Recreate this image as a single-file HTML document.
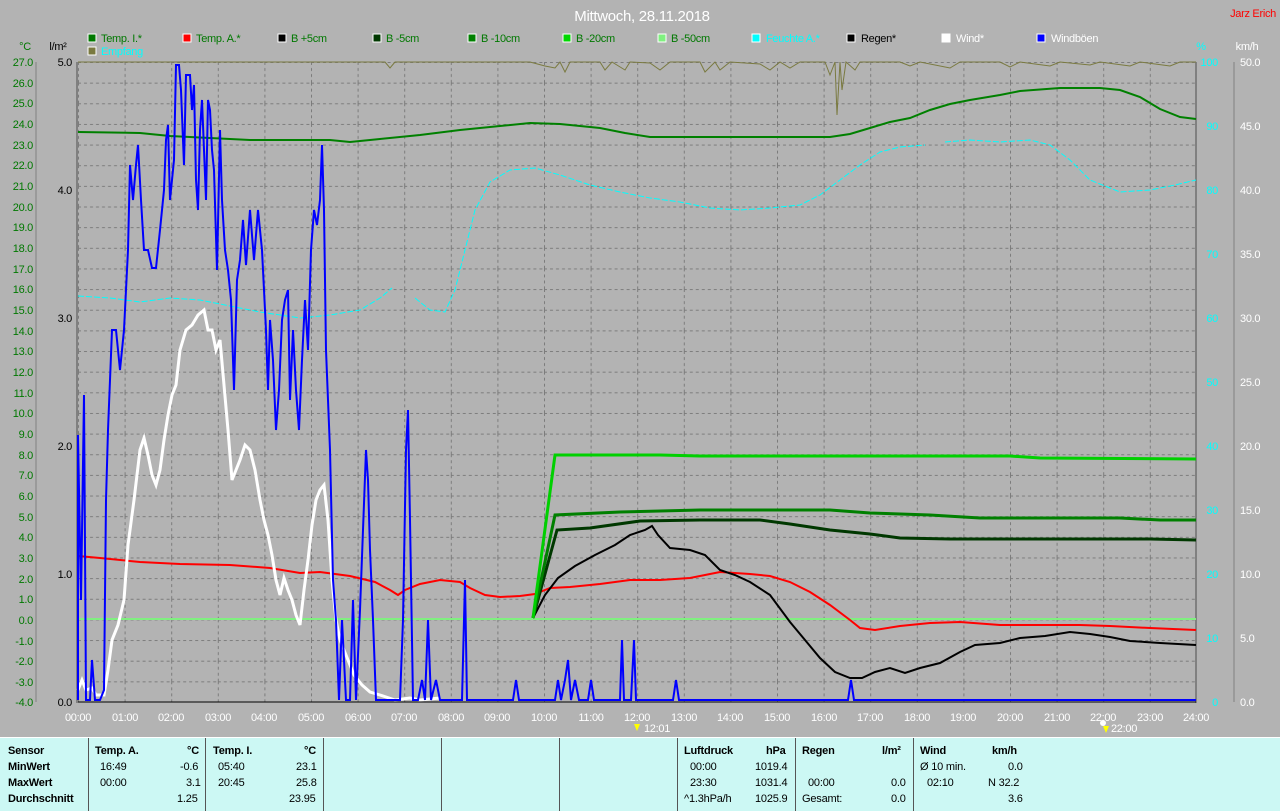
<!DOCTYPE html>
<html><head><meta charset="utf-8"><style>
body{margin:0;width:1280px;height:810px;overflow:hidden;background:#b3b3b3;font-family:"Liberation Sans",sans-serif;}
svg{position:absolute;left:0;top:0}
svg text{letter-spacing:-0.3px}
.tbl{position:absolute;left:0;top:737px;width:1280px;height:73px;background:#ccf8f4;border-top:1px solid #fff;font-size:11px;color:#000;letter-spacing:-0.2px}
.tbl div{position:absolute;white-space:nowrap}
.b{font-weight:bold}
.vl{position:absolute;top:0;width:1px;height:73px;background:#555}
</style></head><body>
<svg width="1280" height="737" font-family="Liberation Sans, sans-serif">
<defs>
<pattern id="g" x="78" y="62" width="46.6" height="20.645" patternUnits="userSpaceOnUse">
<line x1="0" y1="0.5" x2="46.6" y2="0.5" stroke="#7c7c7c" stroke-dasharray="3,3"/>
<line x1="0.5" y1="0" x2="0.5" y2="20.645" stroke="#7c7c7c" stroke-dasharray="3,3"/>
</pattern>
</defs>
<text x="642" y="21" fill="#fff" font-size="15" text-anchor="middle">Mittwoch, 28.11.2018</text>
<text x="1276" y="17" fill="#f00" font-size="11" text-anchor="end">Jarz Erich</text>
<g font-size="11">
<rect x="88" y="34" width="8" height="8" fill="#007800" stroke="#fff"/><text x="101" y="42" fill="#007800">Temp. I.*</text>
<rect x="183" y="34" width="8" height="8" fill="#f00" stroke="#fff"/><text x="196" y="42" fill="#007800">Temp. A.*</text>
<rect x="278" y="34" width="8" height="8" fill="#000" stroke="#fff"/><text x="291" y="42" fill="#007800">B +5cm</text>
<rect x="373" y="34" width="8" height="8" fill="#003800" stroke="#fff"/><text x="386" y="42" fill="#007800">B -5cm</text>
<rect x="468" y="34" width="8" height="8" fill="#008000" stroke="#fff"/><text x="481" y="42" fill="#007800">B -10cm</text>
<rect x="563" y="34" width="8" height="8" fill="#00d800" stroke="#fff"/><text x="576" y="42" fill="#007800">B -20cm</text>
<rect x="658" y="34" width="8" height="8" fill="#80f080" stroke="#fff"/><text x="671" y="42" fill="#007800">B -50cm</text>
<rect x="752" y="34" width="8" height="8" fill="#0ff" stroke="#fff"/><text x="766" y="42" fill="#0ff">Feuchte A.*</text>
<rect x="847" y="34" width="8" height="8" fill="#000" stroke="#fff"/><text x="861" y="42" fill="#000">Regen*</text>
<rect x="942" y="34" width="8" height="8" fill="#fff" stroke="#fff"/><text x="956" y="42" fill="#fff">Wind*</text>
<rect x="1037" y="34" width="8" height="8" fill="#00f" stroke="#fff"/><text x="1051" y="42" fill="#fff">Windböen</text>
<rect x="88" y="47" width="8" height="8" fill="#7a7a40" stroke="#fff"/><text x="101" y="55" fill="#0ff">Empfang</text>
<text x="25" y="50" fill="#007800" text-anchor="middle">°C</text>
<text x="58" y="50" fill="#000" text-anchor="middle">l/m²</text>
<text x="1201" y="50" fill="#0ff" text-anchor="middle">%</text>
<text x="1247" y="50" fill="#fff" text-anchor="middle">km/h</text>
</g>
<rect x="78" y="62" width="1118" height="640" fill="url(#g)"/>
<line x1="77" y1="62" x2="77" y2="703" stroke="#808080" stroke-width="2"/>
<line x1="1196" y1="62" x2="1196" y2="703" stroke="#808080" stroke-width="2"/>
<line x1="36" y1="62" x2="36" y2="702" stroke="#808080"/>
<line x1="1234" y1="62" x2="1234" y2="702" stroke="#808080"/>
<line x1="78" y1="702" x2="1196" y2="702" stroke="#000"/>
<g font-size="11" text-anchor="end">
<text x="33" y="66" fill="#007800">27.0</text><text x="33" y="87" fill="#007800">26.0</text><text x="33" y="107" fill="#007800">25.0</text><text x="33" y="128" fill="#007800">24.0</text><text x="33" y="149" fill="#007800">23.0</text><text x="33" y="169" fill="#007800">22.0</text><text x="33" y="190" fill="#007800">21.0</text><text x="33" y="211" fill="#007800">20.0</text><text x="33" y="231" fill="#007800">19.0</text><text x="33" y="252" fill="#007800">18.0</text><text x="33" y="273" fill="#007800">17.0</text><text x="33" y="293" fill="#007800">16.0</text><text x="33" y="314" fill="#007800">15.0</text><text x="33" y="335" fill="#007800">14.0</text><text x="33" y="355" fill="#007800">13.0</text><text x="33" y="376" fill="#007800">12.0</text><text x="33" y="397" fill="#007800">11.0</text><text x="33" y="417" fill="#007800">10.0</text><text x="33" y="438" fill="#007800">9.0</text><text x="33" y="459" fill="#007800">8.0</text><text x="33" y="479" fill="#007800">7.0</text><text x="33" y="500" fill="#007800">6.0</text><text x="33" y="521" fill="#007800">5.0</text><text x="33" y="541" fill="#007800">4.0</text><text x="33" y="562" fill="#007800">3.0</text><text x="33" y="583" fill="#007800">2.0</text><text x="33" y="603" fill="#007800">1.0</text><text x="33" y="624" fill="#007800">0.0</text><text x="33" y="645" fill="#007800">-1.0</text><text x="33" y="665" fill="#007800">-2.0</text><text x="33" y="686" fill="#007800">-3.0</text><text x="33" y="706" fill="#007800">-4.0</text>
<text x="72" y="66">5.0</text><text x="72" y="194">4.0</text><text x="72" y="322">3.0</text><text x="72" y="450">2.0</text><text x="72" y="578">1.0</text><text x="72" y="706">0.0</text>
<g fill="#0ff"><text x="1218" y="66">100</text><text x="1218" y="130">90</text><text x="1218" y="194">80</text><text x="1218" y="258">70</text><text x="1218" y="322">60</text><text x="1218" y="386">50</text><text x="1218" y="450">40</text><text x="1218" y="514">30</text><text x="1218" y="578">20</text><text x="1218" y="642">10</text><text x="1218" y="706">0</text></g>
<g fill="#fff" text-anchor="start"><text x="1240" y="66">50.0</text><text x="1240" y="130">45.0</text><text x="1240" y="194">40.0</text><text x="1240" y="258">35.0</text><text x="1240" y="322">30.0</text><text x="1240" y="386">25.0</text><text x="1240" y="450">20.0</text><text x="1240" y="514">15.0</text><text x="1240" y="578">10.0</text><text x="1240" y="642">5.0</text><text x="1240" y="706">0.0</text></g>
</g>
<g font-size="11" fill="#fff" text-anchor="middle">
<text x="78" y="721">00:00</text><text x="125" y="721">01:00</text><text x="171" y="721">02:00</text><text x="218" y="721">03:00</text><text x="264" y="721">04:00</text><text x="311" y="721">05:00</text><text x="358" y="721">06:00</text><text x="404" y="721">07:00</text><text x="451" y="721">08:00</text><text x="497" y="721">09:00</text><text x="544" y="721">10:00</text><text x="591" y="721">11:00</text><text x="637" y="721">12:00</text><text x="684" y="721">13:00</text><text x="730" y="721">14:00</text><text x="777" y="721">15:00</text><text x="824" y="721">16:00</text><text x="870" y="721">17:00</text><text x="917" y="721">18:00</text><text x="963" y="721">19:00</text><text x="1010" y="721">20:00</text><text x="1057" y="721">21:00</text><text x="1103" y="721">22:00</text><text x="1150" y="721">23:00</text><text x="1196" y="721">24:00</text>
<text x="657" y="732">12:01</text><text x="1124" y="732">22:00</text>
</g>
<polygon points="634,724 640,724 637,731" fill="#ff0"/>
<polygon points="1103,726 1109,726 1106,733" fill="#ff0"/><circle cx="1103" cy="723" r="3" fill="#fff"/>
<polyline fill="none" stroke="#7a7a40" points="78,62 385,62 390,68 395,62 530,62 545,66 555,68 560,62 565,72 570,62 600,62 605,70 612,62 625,70 630,62 650,63 660,70 670,62 700,62 705,72 715,62 720,70 730,62 760,64 770,70 780,62 790,68 800,62 825,62 830,75 835,62 837,115 840,62 842,90 846,62 855,70 860,62 900,62 910,66 920,62 950,68 960,62 1000,62 1010,67 1020,62 1050,66 1060,62 1090,65 1100,62 1130,66 1140,62 1170,66 1180,62 1196,62"/>
<line x1="78" y1="619" x2="1196" y2="619" stroke="#80f080" stroke-width="2"/>
<polyline fill="none" stroke="#0ff" stroke-dasharray="6,2" points="78,296 110,298 140,302 170,298 200,300 230,306 260,312 300,318 330,315 360,310 380,298 392,288"/>
<polyline fill="none" stroke="#0ff" stroke-dasharray="6,2" points="415,298 430,310 445,312 455,290 465,250 475,210 490,182 510,170 535,168 560,175 590,185 620,192 650,198 680,202 710,208 740,210 770,208 800,205 820,195 840,180 860,165 880,152 900,147 925,145"/>
<polyline fill="none" stroke="#0ff" stroke-dasharray="6,2" points="945,142 970,140 1000,142 1030,140 1050,145 1070,160 1090,180 1120,192 1150,190 1175,185 1196,180"/>
<polyline fill="none" stroke="#008000" stroke-width="2" points="78,132 140,133 170,136 210,138 250,140 330,140 350,142 380,139 420,135 460,130 500,126 530,123 560,124 600,128 625,133 650,137 700,137 760,137 830,137 850,134 870,128 890,122 910,118 930,110 950,104 970,100 1000,95 1020,91 1060,88 1100,88 1120,90 1140,97 1160,109 1180,117 1196,119"/>
<polyline fill="none" stroke="#f00" stroke-width="2" points="78,556 100,558 140,562 180,564 230,565 270,568 300,573 320,572 350,576 375,582 390,590 398,595 405,590 420,584 440,580 460,582 470,588 485,595 500,597 520,596 535,594 550,588 570,587 600,584 630,580 660,580 690,578 720,572 750,574 770,576 790,582 810,592 830,605 850,620 860,628 875,630 900,626 930,623 960,622 1000,625 1040,625 1080,625 1110,626 1150,628 1196,630"/>
<polyline fill="none" stroke="#000" stroke-width="2" points="533,618 545,595 558,578 575,566 595,555 615,545 630,535 645,530 652,526 658,535 670,548 690,550 705,555 720,570 735,575 750,582 770,595 790,622 805,640 820,658 835,672 850,678 862,678 875,672 890,668 905,673 920,668 940,663 960,652 975,645 1000,643 1020,638 1045,636 1070,632 1090,634 1110,637 1130,641 1160,643 1196,645"/>
<polyline fill="none" stroke="#003800" stroke-width="3" points="533,618 557,530 590,528 640,521 700,520 760,520 790,524 830,530 870,534 900,538 950,539 1050,539 1100,539 1150,539 1196,540"/>
<polyline fill="none" stroke="#008000" stroke-width="3" points="533,618 555,515 620,512 700,510 830,510 870,513 930,515 980,518 1050,518 1120,518 1160,520 1196,520"/>
<polyline fill="none" stroke="#00d000" stroke-width="3" points="533,618 555,455 660,455 700,456 1010,456 1040,458 1196,459"/>
<polyline fill="none" stroke="#fff" stroke-width="3" points="78,690 82,680 86,690 92,688 96,695 104,695 108,670 112,640 118,625 124,600 128,545 134,500 140,450 144,438 148,455 152,475 156,485 160,470 164,440 168,415 172,395 176,385 180,350 186,330 192,325 198,315 204,310 208,330 212,330 216,350 220,340 224,385 228,430 232,480 236,470 240,460 245,445 250,450 255,470 260,500 264,520 268,535 272,555 276,580 280,595 284,578 288,590 292,600 296,615 300,625 304,590 308,560 312,525 316,500 320,490 324,485 328,520 332,580 336,620 340,640 344,650 348,660 354,675 362,685 370,692 380,695 395,700 410,698 420,700 440,698"/>
<polyline fill="none" stroke="#00f" stroke-width="2" points="78,700 78,435 81,600 84,395 86,700 90,700 92,660 95,700 100,700 104,690 106,500 108,430 112,330 116,330 120,370 124,330 128,250 130,165 133,200 136,165 138,145 141,200 144,250 148,250 152,268 156,268 160,230 164,190 166,140 168,125 170,200 174,160 176,65 179,65 181,90 184,165 186,75 190,75 192,110 194,85 196,180 198,210 200,130 202,100 206,200 208,100 210,110 212,150 214,170 217,270 220,130 222,200 225,250 228,270 231,300 234,390 237,280 240,260 243,220 246,265 250,210 254,260 258,210 262,250 266,330 268,390 270,320 273,360 276,430 279,390 282,320 285,300 288,290 290,400 293,330 296,390 299,430 302,360 305,300 308,350 311,250 314,210 317,225 320,200 322,145 324,210 326,350 330,450 333,580 336,620 339,700 342,620 346,700 350,700 353,600 356,700 360,610 363,530 366,450 368,480 370,550 373,620 376,700 400,700 403,620 406,450 408,410 410,520 413,700 418,700 422,680 425,700 428,620 431,700 436,680 440,700 462,700 465,580 467,700 513,700 516,680 519,700 555,700 558,680 561,700 565,680 568,660 571,700 575,680 579,700 588,700 591,680 594,700 620,700 622,640 624,700 631,700 634,640 636,700 673,700 676,680 679,700 848,700 851,680 854,700 1196,700"/>
</svg>
<div class="tbl">
<div class="vl" style="left:88px"></div><div class="vl" style="left:205px"></div><div class="vl" style="left:323px"></div><div class="vl" style="left:441px"></div><div class="vl" style="left:559px"></div><div class="vl" style="left:677px"></div><div class="vl" style="left:795px"></div><div class="vl" style="left:913px"></div>
<div class="b" style="left:8px;top:7px">Sensor</div><div class="b" style="left:8px;top:23px">MinWert</div><div class="b" style="left:8px;top:39px">MaxWert</div><div class="b" style="left:8px;top:55px">Durchschnitt</div>
<div class="b" style="left:95px;top:7px">Temp. A.</div><div class="b" style="left:187px;top:7px">°C</div>
<div style="left:100px;top:23px">16:49</div><div style="left:180px;top:23px">-0.6</div>
<div style="left:100px;top:39px">00:00</div><div style="left:186px;top:39px">3.1</div>
<div style="left:177px;top:55px">1.25</div>
<div class="b" style="left:213px;top:7px">Temp. I.</div><div class="b" style="left:304px;top:7px">°C</div>
<div style="left:218px;top:23px">05:40</div><div style="left:296px;top:23px">23.1</div>
<div style="left:218px;top:39px">20:45</div><div style="left:296px;top:39px">25.8</div>
<div style="left:289px;top:55px">23.95</div>
<div class="b" style="left:684px;top:7px">Luftdruck</div><div class="b" style="left:766px;top:7px">hPa</div>
<div style="left:690px;top:23px">00:00</div><div style="left:755px;top:23px">1019.4</div>
<div style="left:690px;top:39px">23:30</div><div style="left:755px;top:39px">1031.4</div>
<div style="left:684px;top:55px">^1.3hPa/h</div><div style="left:755px;top:55px">1025.9</div>
<div class="b" style="left:802px;top:7px">Regen</div><div class="b" style="left:882px;top:7px">l/m²</div>
<div style="left:808px;top:39px">00:00</div><div style="left:891px;top:39px">0.0</div>
<div style="left:802px;top:55px">Gesamt:</div><div style="left:891px;top:55px">0.0</div>
<div class="b" style="left:920px;top:7px">Wind</div><div class="b" style="left:992px;top:7px">km/h</div>
<div style="left:920px;top:23px">Ø 10 min.</div><div style="left:1008px;top:23px">0.0</div>
<div style="left:927px;top:39px">02:10</div><div style="left:988px;top:39px">N 32.2</div>
<div style="left:1008px;top:55px">3.6</div>
</div>
</body></html>
